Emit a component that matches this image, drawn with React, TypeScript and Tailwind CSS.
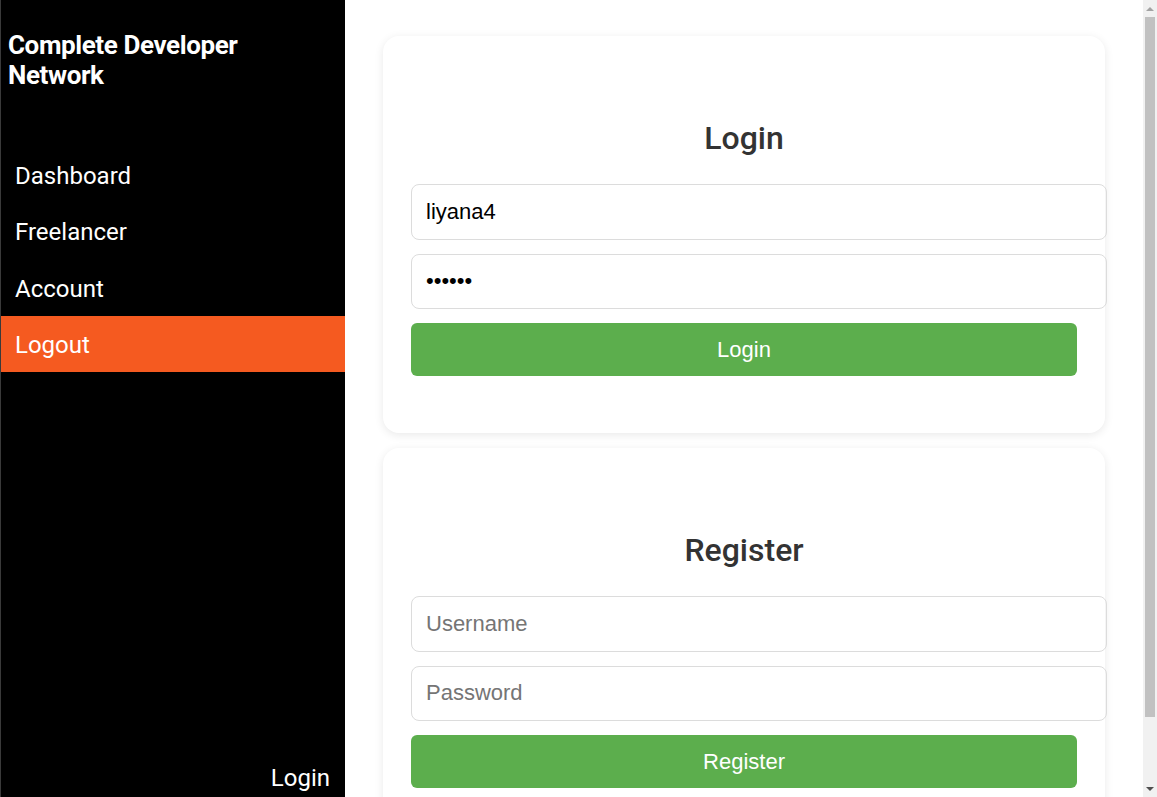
const navItems = ["Dashboard", "Freelancer", "Account", "Logout"];

function Sidebar() {
  return (
    <aside className="sticky top-0 flex h-screen w-[345px] shrink-0 flex-col border-l border-[#3a3a3a] bg-black font-['Roboto',sans-serif] text-white">
      <h1 className="mt-[30px] pl-[7px] text-[26px] leading-[30px] font-bold tracking-[-0.4px]">
        Complete Developer
        <br />
        Network
      </h1>
      <nav className="mt-[57px] flex flex-col">
        {navItems.map((item) => (
          <a
            key={item}
            href="#"
            className={
              item === "Logout"
                ? "flex h-[56.3px] items-center bg-[#f55a20] pt-[2px] pl-[14px] text-[24px]"
                : "flex h-[56.3px] items-center pt-[2px] pl-[14px] text-[24px]"
            }
          >
            {item}
          </a>
        ))}
      </nav>
      <div className="mt-auto pr-[15px] pb-[5px] text-right text-[24px] leading-[28px]">Login</div>
    </aside>
  );
}

// stand-in for the browser's classic scrollbar seen in the screenshot
function Scrollbar() {
  return (
    <div className="sticky top-0 flex h-screen w-[14px] shrink-0 flex-col bg-[#f1f1f1]">
      <div className="flex h-[17px] items-center justify-center">
        <div className="h-0 w-0 border-x-[4px] border-b-[4px] border-x-transparent border-b-[#a3a3a3]" />
      </div>
      <div className="mx-[2px] h-[700px] bg-[#c1c1c1]" />
      <div className="mt-auto flex h-[17px] items-center justify-center">
        <div className="h-0 w-0 border-x-[4px] border-t-[4px] border-x-transparent border-t-[#505050]" />
      </div>
    </div>
  );
}

function AuthCard({
  title,
  fields,
  button,
}: {
  title: string;
  fields: { value?: string; placeholder?: string; type: string }[];
  button: string;
}) {
  return (
    <div className="rounded-[16px] bg-white px-[28px] pt-[82px] pb-[57px] shadow-[0_2px_10px_rgba(0,0,0,0.09)]">
      <h2 className="mb-[26px] text-center font-['Roboto',sans-serif] text-[32px] leading-[40px] font-medium text-[#333]">
        {title}
      </h2>
      <div className="flex flex-col gap-[14px]">
        {fields.map((f, i) => (
          <input
            key={i}
            type={f.type}
            defaultValue={f.value}
            placeholder={f.placeholder}
            className="box-content h-[53.5px] w-full rounded-[8px] border border-[#dcdcdc] px-[14px] font-['Liberation_Sans',Arial,sans-serif] text-[22px] text-black outline-none placeholder:text-[#757575]"
          />
        ))}
        <button className="h-[53px] w-full rounded-[6px] bg-[#5cae4d] font-['Liberation_Sans',Arial,sans-serif] text-[22px] text-white">
          {button}
        </button>
      </div>
    </div>
  );
}

export default function App() {
  return (
    <div className="flex min-h-screen bg-white">
      <Sidebar />
      <main className="flex min-w-0 flex-1 flex-col gap-[15px] px-[38px] pt-[36px] pb-[40px]">
        <AuthCard
          title="Login"
          fields={[
            { type: "text", value: "liyana4" },
            { type: "password", value: "123456" },
          ]}
          button="Login"
        />
        <AuthCard
          title="Register"
          fields={[
            { type: "text", placeholder: "Username" },
            { type: "password", placeholder: "Password" },
          ]}
          button="Register"
        />
      </main>
      <Scrollbar />
    </div>
  );
}
